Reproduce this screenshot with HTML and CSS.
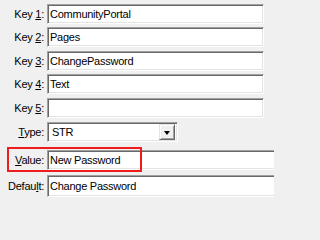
FILE: index.html
```html
<!DOCTYPE html>
<html>
<head>
<meta charset="utf-8">
<link rel="stylesheet" href="styles.css">
</head>
<body>
<div class="form">
  <div class="row r1"><label class="lbl">Key <u>1</u>:</label><div class="field">CommunityPortal</div></div>
  <div class="row r2"><label class="lbl">Key <u>2</u>:</label><div class="field">Pages</div></div>
  <div class="row r3"><label class="lbl">Key <u>3</u>:</label><div class="field">ChangePassword</div></div>
  <div class="row r4"><label class="lbl">Key <u>4</u>:</label><div class="field">Text</div></div>
  <div class="row r5"><label class="lbl">Key <u>5</u>:</label><div class="field"></div></div>
  <div class="row r6"><label class="lbl"><u>T</u>ype:</label>
    <div class="combo"><span class="combo-text">STR</span><span class="combo-btn"><span class="tri"></span></span></div>
  </div>
  <div class="row r7"><label class="lbl"><u>V</u>alue:</label><div class="field wide">New Password</div></div>
  <div class="row r8"><label class="lbl">Defau<u>l</u>t:</label><div class="field wide tall">Change Password</div></div>
  <div class="highlight"></div>
</div>
</body>
</html>
```
FILE: styles.css
```css
html, body {
  margin: 0;
  padding: 0;
  background: #f0f0f0;
  overflow: hidden;
}
.form {
  position: relative;
  width: 274px;
  height: 200px;
  overflow: hidden;
  font-family: "Liberation Sans", Arial, sans-serif;
  font-size: 11px;
  letter-spacing: -0.25px;
  color: #000;
  display: flex;
  flex-direction: column;
  padding-top: 4px;
  box-sizing: border-box;
}
.row {
  display: flex;
  align-items: center;
  height: 20px;
  flex: none;
}
.r2, .r4 { margin-top: 3px; }
.r3, .r5 { margin-top: 4px; }
.r6 { margin-top: 4px; }
.r7 { margin-top: 8px; }
.r8 { margin-top: 5px; height: 22px; }
.lbl {
  width: 47px;
  flex: none;
  box-sizing: border-box;
  text-align: right;
  padding-right: 3px;
  white-space: nowrap;
}
.field {
  flex: none;
  width: 217px;
  height: 20px;
  box-sizing: border-box;
  background: #fff;
  border: 1px solid;
  border-color: #a0a0a0 #ffffff #ffffff #a0a0a0;
  box-shadow: inset 1px 1px 0 #696969, inset -1px -1px 0 #e3e3e3;
  padding-left: 2px;
  display: flex;
  align-items: center;
  white-space: nowrap;
}
.field.wide { width: 260px; }
.field.tall { height: 22px; }
.combo {
  flex: none;
  width: 131px;
  height: 20px;
  box-sizing: border-box;
  background: #fff;
  border: 1px solid;
  border-color: #a0a0a0 #ffffff #ffffff #a0a0a0;
  box-shadow: inset 1px 1px 0 #696969, inset -1px -1px 0 #e3e3e3;
  display: flex;
  align-items: center;
  padding: 2px 2px 2px 4px;
}
.combo-text { flex: 1; }
.combo-btn {
  width: 16px;
  height: 16px;
  box-sizing: border-box;
  background: #f0f0f0;
  border: 1px solid;
  border-color: #e3e3e3 #696969 #696969 #e3e3e3;
  box-shadow: inset 1px 1px 0 #ffffff, inset -1px -1px 0 #a0a0a0;
  display: flex;
  align-items: center;
  justify-content: center;
}
.tri {
  width: 0;
  height: 0;
  border-left: 3.5px solid transparent;
  border-right: 3.5px solid transparent;
  border-top: 4px solid #000;
  margin-top: 1px;
}
.highlight {
  position: absolute;
  left: 7px;
  top: 147px;
  width: 135px;
  height: 25px;
  box-sizing: border-box;
  border: 2px solid #ee1c1c;
  pointer-events: none;
}
```
